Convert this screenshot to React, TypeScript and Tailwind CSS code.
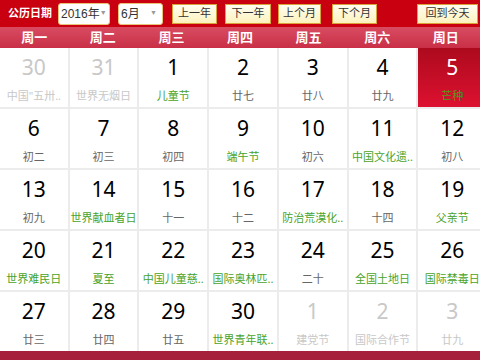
import React from 'react';

type Day = { d: number; sub: string; kind: 'lunar' | 'fest' | 'out' | 'sel' };

const WEEK = ['周一', '周二', '周三', '周四', '周五', '周六', '周日'];

const DAYS: Day[] = [
  { d: 30, sub: '中国"五卅..', kind: 'out' },
  { d: 31, sub: '世界无烟日', kind: 'out' },
  { d: 1, sub: '儿童节', kind: 'fest' },
  { d: 2, sub: '廿七', kind: 'lunar' },
  { d: 3, sub: '廿八', kind: 'lunar' },
  { d: 4, sub: '廿九', kind: 'lunar' },
  { d: 5, sub: '芒种', kind: 'sel' },
  { d: 6, sub: '初二', kind: 'lunar' },
  { d: 7, sub: '初三', kind: 'lunar' },
  { d: 8, sub: '初四', kind: 'lunar' },
  { d: 9, sub: '端午节', kind: 'fest' },
  { d: 10, sub: '初六', kind: 'lunar' },
  { d: 11, sub: '中国文化遗..', kind: 'fest' },
  { d: 12, sub: '初八', kind: 'lunar' },
  { d: 13, sub: '初九', kind: 'lunar' },
  { d: 14, sub: '世界献血者日', kind: 'fest' },
  { d: 15, sub: '十一', kind: 'lunar' },
  { d: 16, sub: '十二', kind: 'lunar' },
  { d: 17, sub: '防治荒漠化..', kind: 'fest' },
  { d: 18, sub: '十四', kind: 'lunar' },
  { d: 19, sub: '父亲节', kind: 'fest' },
  { d: 20, sub: '世界难民日', kind: 'fest' },
  { d: 21, sub: '夏至', kind: 'fest' },
  { d: 22, sub: '中国儿童慈..', kind: 'fest' },
  { d: 23, sub: '国际奥林匹..', kind: 'fest' },
  { d: 24, sub: '二十', kind: 'lunar' },
  { d: 25, sub: '全国土地日', kind: 'fest' },
  { d: 26, sub: '国际禁毒日', kind: 'fest' },
  { d: 27, sub: '廿三', kind: 'lunar' },
  { d: 28, sub: '廿四', kind: 'lunar' },
  { d: 29, sub: '廿五', kind: 'lunar' },
  { d: 30, sub: '世界青年联..', kind: 'fest' },
  { d: 1, sub: '建党节', kind: 'out' },
  { d: 2, sub: '国际合作节', kind: 'out' },
  { d: 3, sub: '廿九', kind: 'out' },
];

const font = { fontFamily: '"Noto Sans", "Noto Sans CJK SC", sans-serif' };
const selFont = { fontFamily: '"Liberation Sans", "Noto Sans CJK SC", sans-serif' };

const Select = ({ label, w }: { label: string; w: string }) => (
  <div className={`${w} h-[22px] bg-white border border-[#e9c37a] rounded-[3px] flex items-center justify-between pl-[2px] pr-[5px] text-[12px] text-[#333] whitespace-nowrap`} style={selFont}>
    <span>{label}</span>
    <span className="text-[7px] text-[#999]">▼</span>
  </div>
);

const Btn = ({ label, w }: { label: string; w: string }) => (
  <div className={`${w} h-[20px] bg-gradient-to-b from-[#fffdf0] to-[#fdf2bd] border border-[#d9a23a] flex items-center justify-center text-[11px] text-[#333] whitespace-nowrap`}>
    {label}
  </div>
);

export default function App() {
  return (
    <div className="w-[480px] h-[360px] overflow-hidden bg-white" style={font}>
      {/* top bar */}
      <div className="h-[27px] bg-[#c8000f] flex items-center">
        <span className="ml-[8px] w-[50px] text-[11px] font-bold text-white whitespace-nowrap">公历日期</span>
        <Select label="2016年" w="w-[52px]" />
        <div className="ml-[8px]"><Select label="6月" w="w-[45px]" /></div>
        <div className="ml-[9px]"><Btn label="上一年" w="w-[45px]" /></div>
        <div className="ml-[8px]"><Btn label="下一年" w="w-[46px]" /></div>
        <div className="ml-[7px]"><Btn label="上个月" w="w-[43px]" /></div>
        <div className="ml-[11px]"><Btn label="下个月" w="w-[45px]" /></div>
        <div className="ml-[40px]"><Btn label="回到今天" w="w-[61px]" /></div>
      </div>

      {/* weekday header */}
      <div className="h-[21px] grid grid-cols-7 bg-gradient-to-b from-[#d84b61] to-[#c92f47]">
        {WEEK.map(w => (
          <div key={w} className="flex items-center justify-center text-[13px] font-bold text-white">{w}</div>
        ))}
      </div>

      {/* days */}
      <div className="w-[486px] grid grid-cols-7 gap-[2px] bg-[#ececec]">
        {DAYS.map((c, i) => {
          const sel = c.kind === 'sel';
          const num = sel ? 'text-white' : c.kind === 'out' ? 'text-[#c8c8c8]' : 'text-black';
          const sub = sel ? 'text-[#4f9a1c]' : c.kind === 'out' ? 'text-[#c8c8c8]' : c.kind === 'fest' ? 'text-[#4aa328]' : 'text-[#666]';
          return (
            <div key={i} className={`h-[59px] flex flex-col items-center ${sel ? 'bg-gradient-to-b from-[#ad0a1e] to-[#dd1130]' : 'bg-white'}`}>
              <span className={`mt-[5px] text-[21px] leading-[28px] ${num}`}>{c.d}</span>
              <span className={`mt-[8px] text-[11px] leading-[14px] whitespace-nowrap ${sub}`}>{c.sub}</span>
            </div>
          );
        })}
      </div>

      <div className="h-[20px] bg-[#a6203b]" />
    </div>
  );
}
